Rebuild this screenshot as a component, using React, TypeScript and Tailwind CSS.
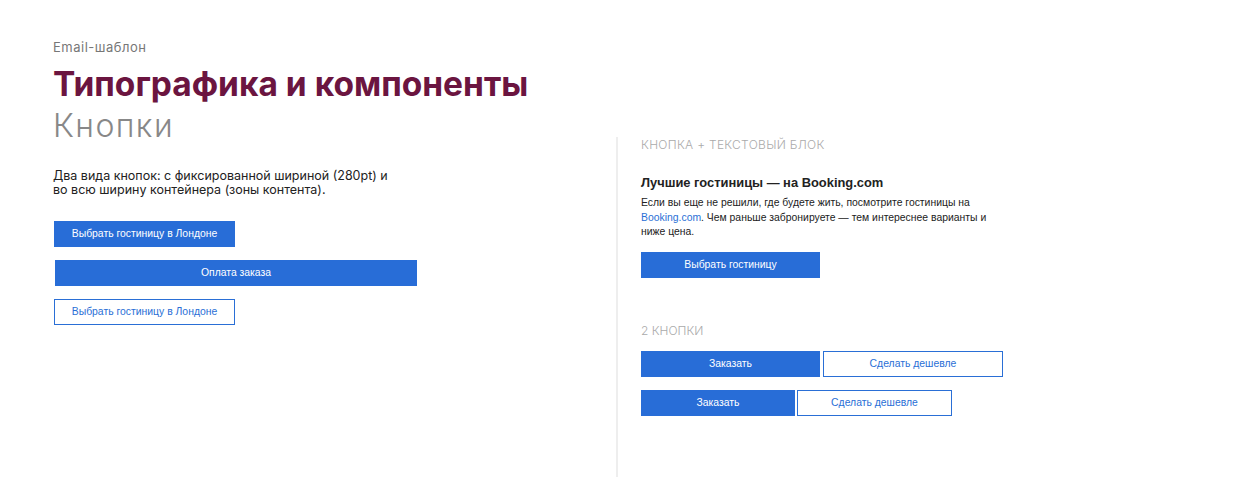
import React from 'react'

const mont = "font-['Inter',sans-serif]"
const helv = "font-['Liberation_Sans',Arial,sans-serif]"

const Btn = ({ children, w, outline, className = '' }: any) => (
  <div
    className={`${helv} flex h-[26px] items-center justify-center text-[10.4px] ${
      outline ? 'border border-[#2a6fd6] bg-white text-[#2a6fd6]' : 'bg-[#286dd7] text-white'
    } ${w} ${className}`}
  >
    {children}
  </div>
)

export default function App() {
  return (
    <div className="flex h-[477px] w-full overflow-hidden bg-white">
      <div className="w-[616px] shrink-0 pl-[53px] pt-[39px]">
        <div className={`${mont} text-[13px] leading-[16px] tracking-[0.5px] text-[#777]`}>Email-шаблон</div>
        <h1 className={`${mont} mt-[9px] text-[33.5px] font-bold leading-[40px] text-[#6b1540]`}>
          Типографика и компоненты
        </h1>
        <div className={`${mont} mt-[2px] text-[32px] font-light leading-[40px] tracking-[1.4px] text-[#888]`}>Кнопки</div>
        <p className={`${mont} mt-[23px] text-[12.5px] leading-[14px] text-[#222]`}>
          Два вида кнопок: с фиксированной шириной (280pt) и
          <br />
          во всю ширину контейнера (зоны контента).
        </p>
        <div className="mt-[24px] flex flex-col gap-[13px]">
          <Btn w="w-[181px]" className="ml-px">Выбрать гостиницу в Лондоне</Btn>
          <Btn w="w-[362px]" className="ml-[2px]">Оплата заказа</Btn>
          <Btn w="w-[181px]" outline className="ml-px">Выбрать гостиницу в Лондоне</Btn>
        </div>
      </div>
      <div className="mt-[137px] flex-1 border-l-2 border-[#eeeeee] pl-[23px]">
        <div className={`${mont} text-[12px] font-light leading-[16px] tracking-[0.3px] text-[#aaa]`}>КНОПКА + ТЕКСТОВЫЙ БЛОК</div>
        <div className={`${helv} mt-[21px] text-[12.9px] font-bold leading-[18px] text-[#222]`}>
          Лучшие гостиницы — на Booking.com
        </div>
        <p className={`${helv} mt-[4px] w-[350px] text-[10.4px] leading-[14.5px] text-[#222]`}>
          Если вы еще не решили, где будете жить, посмотрите гостиницы на{' '}
          <span className="text-[#2a6fd6]">Booking.com</span>. Чем раньше забронируете — тем интереснее варианты и
          ниже цена.
        </p>
        <Btn w="w-[179px]" className="mt-[12px]">Выбрать гостиницу</Btn>
        <div className={`${mont} mt-[45px] text-[12px] font-light leading-[16px] text-[#aaa]`}>2 КНОПКИ</div>
        <div className="mt-[12px] flex gap-[3px]">
          <Btn w="w-[179px]">Заказать</Btn>
          <Btn w="w-[180px]" outline>Сделать дешевле</Btn>
        </div>
        <div className="mt-[13px] flex gap-[2px]">
          <Btn w="w-[154px]">Заказать</Btn>
          <Btn w="w-[155px]" outline>Сделать дешевле</Btn>
        </div>
      </div>
    </div>
  )
}
